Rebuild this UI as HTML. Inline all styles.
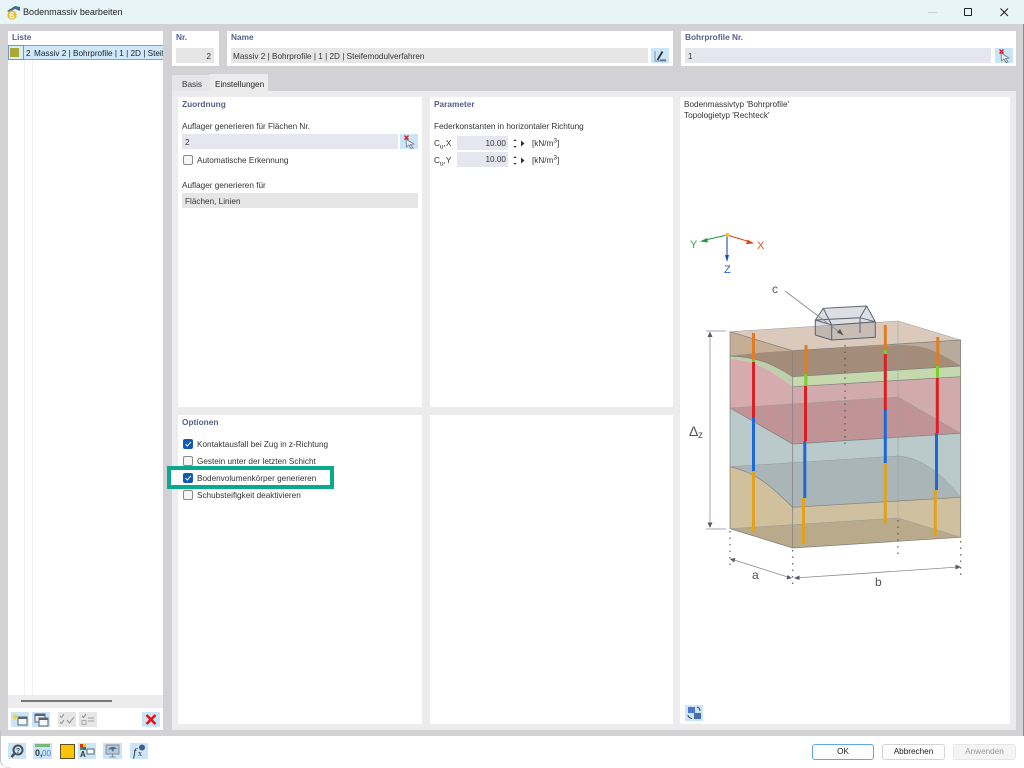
<!DOCTYPE html>
<html lang="de"><head><meta charset="utf-8"><title>Bodenmassiv bearbeiten</title>
<style>
html,body{margin:0;padding:0;width:1024px;height:768px;overflow:hidden;background:#fff}
body{font-family:"Liberation Sans",sans-serif;font-size:8.2px;color:#333;position:relative;filter:blur(.3px)}
.a{position:absolute;box-sizing:border-box}
.w{background:#fff}
.t{position:absolute;white-space:nowrap;line-height:11px;height:11px}
.h{font-weight:bold;color:#55608c;font-size:8.3px}
.f{position:absolute;background:#e6e6f0;height:15px;line-height:17px;box-sizing:border-box;padding:0 3px;white-space:nowrap;overflow:hidden}
.g{background:#e6e6e6}
.b{position:absolute;background:#cbe5f8}
.cb{position:absolute;width:10px;height:10px;box-sizing:border-box;border:1px solid #8a8a8a;border-radius:2px;background:#f6f6f6}
.cb.on{background:#0f5cb4;border-color:#0f5cb4}
.cb.on svg{position:absolute;left:0;top:0}
.btn{position:absolute;top:744px;height:16px;line-height:14px;text-align:center;box-sizing:border-box;border:1px solid #d4d4d4;border-radius:3px;background:#fdfdfd;color:#222}
svg{position:absolute;overflow:visible}
</style></head><body>

<div class="a" style="left:0;top:0;width:1024px;height:24px;background:#e8f5f8"></div>
<svg style="left:6px;top:4px" width="16" height="16" viewBox="0 0 16 16"><path d="M1 7 L9 2 L14 3 L14 7 L9 5 L3 8Z" fill="#3c6d96"/><circle cx="6" cy="11" r="4.6" fill="#f0b81e"/><text x="6" y="14.4" font-size="9.5" font-weight="bold" text-anchor="middle" fill="#fff" font-family="Liberation Sans">6</text></svg>
<div class="t" style="left:23px;top:7px;font-size:9.05px;color:#222">Bodenmassiv bearbeiten</div>
<div class="a" style="left:928px;top:12px;width:9px;height:1px;background:#c8d0d2"></div>
<div class="a" style="left:964px;top:8px;width:8px;height:8px;border:1.3px solid #222;border-radius:1px"></div>
<svg style="left:1000px;top:8px" width="9" height="9" viewBox="0 0 9 9"><path d="M.5 .5L8 8M8 .5L.5 8" stroke="#222" stroke-width="1.1" fill="none"/></svg>

<div class="a" style="left:0;top:24px;width:1023px;height:712px;background:#d2d2d5"></div>
<div class="a" style="left:1023px;top:24px;width:1px;height:712px;background:#8c8c90"></div>
<div class="a" style="left:0;top:730px;width:10px;height:38px;border-left:1px solid #c4c4c6;border-bottom:1px solid #e0e0e0;border-bottom-left-radius:8px"></div>

<!-- Liste -->
<div class="a w" style="left:8px;top:31px;width:155px;height:699px"></div>
<div class="t h" style="left:12px;top:32px">Liste</div>
<div class="a" style="left:24px;top:45px;width:1px;height:650px;background:#eef0f6"></div>
<div class="a" style="left:32px;top:45px;width:1px;height:650px;background:#eef0f6"></div>
<div class="a" style="left:8px;top:45px;width:155px;height:15px;background:#cfe8fb;border-top:1px solid #66aee8;border-bottom:1px solid #66aee8"></div>
<div class="a" style="left:8px;top:45px;width:16px;height:15px;border:1px solid #6b9cc6;background:#d9ecfa"></div>
<div class="a" style="left:10px;top:48px;width:9px;height:9px;background:#aaa832"></div>
<div class="t" style="left:26px;top:48px;color:#222">2</div>
<div class="t" style="left:34px;top:48px;width:129px;overflow:hidden;color:#222">Massiv 2 | Bohrprofile | 1 | 2D | Steifemodulverfahren</div>
<div class="a" style="left:8px;top:695px;width:155px;height:13px;background:#ececec"></div>
<div class="a" style="left:21px;top:700px;width:91px;height:2px;background:#777"></div>

<div class="b" style="left:11px;top:712px;width:18px;height:15px"></div>
<svg style="left:11px;top:712px" width="18" height="15" viewBox="0 0 18 15"><rect x="7" y="5" width="9" height="8" fill="#f4f8fb" stroke="#56646e"/><rect x="7" y="5" width="9" height="2" fill="#56646e"/><path d="M4 1l1 2.2 2.3-.6-1.2 2 1.6 1.7-2.4-.1L4 8.3 3.2 6.2 .8 6.3l1.600-1.700-1.200-2 2.300.6z" fill="#f6d52a"/></svg>
<div class="b" style="left:32px;top:712px;width:18px;height:15px"></div>
<svg style="left:32px;top:712px" width="18" height="15" viewBox="0 0 18 15"><rect x="3" y="2" width="10" height="8" fill="#e8f0f6" stroke="#56646e"/><rect x="3" y="2" width="10" height="2" fill="#56646e"/><rect x="7" y="6" width="9" height="8" fill="#f4f8fb" stroke="#56646e"/><rect x="7" y="6" width="9" height="2" fill="#56646e"/></svg>
<div class="a" style="left:58px;top:712px;width:18px;height:15px;background:#e6e6e6"></div>
<svg style="left:58px;top:712px" width="18" height="15" viewBox="0 0 18 15"><path d="M2 4l1.500 1.500L6 2M2 10l1.500 1.500L6 8M9 8l2.500 3L16 5" stroke="#8b8b8b" fill="none"/></svg>
<div class="a" style="left:79px;top:712px;width:18px;height:15px;background:#e6e6e6"></div>
<svg style="left:79px;top:712px" width="18" height="15" viewBox="0 0 18 15"><path d="M3 4l1.500 1.500L7 2" stroke="#8b8b8b" fill="none"/><rect x="3" y="8.500" width="4" height="4" fill="none" stroke="#aaa"/><path d="M9 6h6M9 9h6" stroke="#a0a0a0"/></svg>
<div class="b" style="left:142px;top:712px;width:18px;height:15px"></div>
<svg style="left:142px;top:712px" width="18" height="15" viewBox="0 0 18 15"><path d="M4.500 3L13.500 12M13.500 3L4.500 12" stroke="#ee1111" stroke-width="2.600"/></svg>

<!-- Kopfzeile -->
<div class="a w" style="left:172px;top:31px;width:47px;height:35px"></div>
<div class="t h" style="left:176px;top:32px">Nr.</div>
<div class="f g" style="left:176px;top:48px;width:38px;text-align:right">2</div>
<div class="a w" style="left:227px;top:31px;width:446px;height:35px"></div>
<div class="t h" style="left:231px;top:32px">Name</div>
<div class="f g" style="left:231px;top:48px;width:417px;padding-left:2px">Massiv 2 | Bohrprofile | 1 | 2D | Steifemodulverfahren</div>
<div class="b" style="left:651px;top:48px;width:18px;height:15px"></div>
<svg style="left:651px;top:48px" width="18" height="15" viewBox="0 0 18 15"><path d="M4 3v10h11" stroke="#7d93a6" fill="none"/><path d="M6.500 12L11.500 3.500" stroke="#333" stroke-width="1.800"/><path d="M9 12h6" stroke="#555"/></svg>
<div class="a w" style="left:681px;top:31px;width:335px;height:35px"></div>
<div class="t h" style="left:685px;top:32px">Bohrprofile Nr.</div>
<div class="f" style="left:685px;top:48px;width:306px">1</div>
<div class="b" style="left:995px;top:48px;width:18px;height:15px"></div>
<svg style="left:995px;top:48px" width="18" height="15" viewBox="0 0 18 15"><path d="M6 5l8 5-3.500.5L13 14l-2 .5-2-3.500-2.500 2z" fill="#e8eef2" stroke="#6c7a86" stroke-width=".8"/><path d="M4.500 1.500l4 4M8.500 1.500l-4 4" stroke="#d42020" stroke-width="1.400"/></svg>

<!-- Tabs -->
<div class="a" style="left:172px;top:75px;width:38px;height:16px;background:#e6e6e8"></div>
<div class="t" style="left:182px;top:79px">Basis</div>
<div class="a" style="left:210px;top:74px;width:58px;height:17px;background:#ececec"></div>
<div class="t" style="left:215px;top:79px;color:#222">Einstellungen</div>
<div class="a" style="left:172px;top:91px;width:844px;height:639px;background:#ececec"></div>

<!-- Zuordnung -->
<div class="a w" style="left:178px;top:97px;width:244px;height:310px"></div>
<div class="t h" style="left:182px;top:99px">Zuordnung</div>
<div class="t" style="left:182px;top:121px">Auflager generieren für Flächen Nr.</div>
<div class="f" style="left:182px;top:134px;width:216px">2</div>
<div class="b" style="left:400px;top:134px;width:18px;height:15px"></div>
<svg style="left:400px;top:134px" width="18" height="15" viewBox="0 0 18 15"><path d="M6 5l8 5-3.500.5L13 14l-2 .5-2-3.500-2.500 2z" fill="#e8eef2" stroke="#6c7a86" stroke-width=".8"/><path d="M4.500 1.500l4 4M8.500 1.500l-4 4" stroke="#d42020" stroke-width="1.400"/></svg>
<div class="cb" style="left:183px;top:155px"></div>
<div class="t" style="left:197px;top:155px">Automatische Erkennung</div>
<div class="t" style="left:182px;top:180px">Auflager generieren für</div>
<div class="f g" style="left:182px;top:193px;width:236px">Flächen, Linien</div>

<!-- Parameter -->
<div class="a w" style="left:430px;top:97px;width:243px;height:310px"></div>
<div class="t h" style="left:434px;top:99px">Parameter</div>
<div class="t" style="left:434px;top:121px">Federkonstanten in horizontaler Richtung</div>
<div class="t" style="left:434px;top:138px">C<sub style="font-size:6.500px;line-height:0">u</sub>,X</div>
<div class="f" style="left:457px;top:136px;width:51px;height:14px;line-height:15px;text-align:right;padding-right:2px">10.00</div>
<div class="t" style="left:532px;top:138px">[kN/m<sup style="font-size:6.500px;line-height:0">3</sup>]</div>
<div class="t" style="left:434px;top:155px">C<sub style="font-size:6.500px;line-height:0">u</sub>,Y</div>
<div class="f" style="left:457px;top:152px;width:51px;height:15px;line-height:16px;text-align:right;padding-right:2px">10.00</div>
<div class="t" style="left:532px;top:155px">[kN/m<sup style="font-size:6.500px;line-height:0">3</sup>]</div>
<svg style="left:512px;top:137px" width="14" height="30" viewBox="0 0 14 30"><path d="M1.500 4L3 2 4.500 4zM1.500 9L3 11 4.500 9zM1.500 21L3 19 4.500 21zM1.500 26L3 28 4.500 26zM9 3.500L12.500 6.500 9 9.500zM9 20.500L12.500 23.500 9 26.500z" fill="#333"/></svg>

<!-- Optionen -->
<div class="a w" style="left:178px;top:415px;width:244px;height:309px"></div>
<div class="t h" style="left:182px;top:417px">Optionen</div>
<div class="a" style="left:167px;top:466px;width:167px;height:23px;background:#fff;border:4px solid #0aa88c"></div>
<div class="cb on" style="left:183px;top:439px"><svg width="8" height="8" viewBox="0 0 8 8"><path d="M1.500 4.200L3.300 6 6.800 2" stroke="#fff" fill="none"/></svg></div>
<div class="t" style="left:197px;top:439px">Kontaktausfall bei Zug in z-Richtung</div>
<div class="cb" style="left:183px;top:456px"></div>
<div class="t" style="left:197px;top:456px">Gestein unter der letzten Schicht</div>
<div class="cb on" style="left:183px;top:473px"><svg width="8" height="8" viewBox="0 0 8 8"><path d="M1.500 4.200L3.300 6 6.800 2" stroke="#fff" fill="none"/></svg></div>
<div class="t" style="left:197px;top:473px">Bodenvolumenkörper generieren</div>
<div class="cb" style="left:183px;top:490px"></div>
<div class="t" style="left:197px;top:490px">Schubsteifigkeit deaktivieren</div>

<div class="a w" style="left:430px;top:415px;width:243px;height:309px"></div>

<!-- Grafik -->
<div class="a w" style="left:680px;top:97px;width:330px;height:627px"></div>
<div class="t" style="left:684px;top:99px">Bodenmassivtyp 'Bohrprofile'</div>
<div class="t" style="left:684px;top:110px">Topologietyp 'Rechteck'</div>

<svg style="left:0;top:0" width="1024" height="768" viewBox="0 0 1024 768" font-family="Liberation Sans">
<!-- axes -->
<path d="M727 235L752 242.500" stroke="#d0481c" stroke-width="1.100"/><path d="M754 243.500L746 244 747.500 239.500z" fill="#d0481c"/>
<path d="M727 235L703 240.500" stroke="#1c9a4a" stroke-width="1.100"/><path d="M700 241.500L707 238 708 242.500z" fill="#1c9a4a"/>
<path d="M727 235V258" stroke="#1c48c0" stroke-width="1.100"/><path d="M727 262L725 255H729z" fill="#1c48c0"/>
<circle cx="727.300" cy="234.700" r="2" fill="#f2c81e"/>
<text x="757" y="249" font-size="11" fill="#d8582c">X</text>
<text x="690" y="248" font-size="11" fill="#2aa860">Y</text>
<text x="724" y="273" font-size="11" fill="#2c58c8">Z</text>

<!-- top -->
<path d="M730 331.700L792.700 350.700 960.700 340 898 321z" fill="#dbcabb"/>
<!-- brown -->
<path d="M730 331.700L792.700 350.700V376.700C770 360 755 357 730 356z" fill="#c6ad96"/>
<path d="M792.700 350.700L960.700 340V366L792.700 376.700z" fill="#b9aa9b"/>
<path d="M730 356C760 352 772 352 800 350L898 345C925 345 935 350 960.700 366L792.700 376.700C770 362 755 357 730 356z" fill="#a38d7a"/>
<!-- green -->
<path d="M730 356C755 357 770 362 792.700 376.700V386.700C770 370 755 360 730 359z" fill="#bfcfaa"/>
<path d="M792.700 376.700L960.700 366V376.700L792.700 386.700z" fill="#c6d8ae"/>
<!-- red -->
<path d="M730 359C755 360 770 370 792.700 386.700V444L730 408z" fill="#d6abad"/>
<path d="M792.700 386.700L960.700 376.700V433.300L792.700 444z" fill="#d1abac"/>
<path d="M730 408L792.700 444 960.700 433.300 898 397z" fill="#c09496"/>
<!-- blue -->
<path d="M730 408L792.700 444V507.300C770 485 755 472 730 466.700z" fill="#bacaca"/>
<path d="M792.700 444L960.700 433.300V497.300L792.700 507.300z" fill="#bac9c9"/>
<path d="M730 466.700L898 456C925 458 945 478 960.700 497.300L792.700 507.300C770 485 755 472 730 466.700z" fill="#a9b5b7"/>
<!-- tan -->
<path d="M730 466.700C755 472 770 485 792.700 507.300V548L730 528.700z" fill="#d1c09c"/>
<path d="M792.700 507.300L960.700 497.300V537.300L792.700 548z" fill="#cfc0a0"/>
<path d="M730 528.700L792.700 548 960.700 537.300 898 518z" fill="#b9aa8c"/>
<!-- edges -->
<g fill="none" stroke="#7d7d7d" stroke-width=".7">
<path d="M730 331.700L792.700 350.700 960.700 340V537.300L792.700 548 730 528.700z"/>
<path d="M792.700 350.700V548"/>
<path d="M730 408L792.700 444 960.700 433.300"/>
<path d="M730 466.700C755 472 770 485 792.700 507.300L960.700 497.300"/>
<path d="M792.700 376.700L960.700 366M792.700 386.700L960.700 376.700M730 356C755 357 770 362 792.700 376.700"/>
</g>
<g fill="none" stroke="#9a9a9a" stroke-width=".5">
<path d="M730 331.700L898 321 960.700 340M898 321V518M730 408L898 397 960.700 433.300M730 466.700L898 456C925 458 945 478 960.700 497.300M730 528.700L898 518 960.700 537.300"/>
</g>
<!-- central dots -->
<path d="M845 345V449" stroke="#444" stroke-width="1" stroke-dasharray="1.500 5"/>
<!-- poles -->
<g stroke-width="3" fill="none">
<path d="M753.500 333V359.500" stroke="#df7d20"/><path d="M753.500 359.500V362" stroke="#7ccc2c"/><path d="M753.500 362V418" stroke="#dc1e26"/><path d="M753.500 418V471" stroke="#1c68d8"/><path d="M753.500 471V532" stroke="#e2a21e"/>
<path d="M806 345V374" stroke="#df7d20"/><path d="M805.800 374V386" stroke="#7ccc2c"/><path d="M805.500 386V441" stroke="#dc1e26"/><path d="M804.800 441V498" stroke="#1c68d8"/><path d="M803.500 498V544" stroke="#e2a21e"/>
<path d="M885.300 325V350" stroke="#df7d20"/><path d="M885.300 350V354" stroke="#7ccc2c"/><path d="M885.300 354V410" stroke="#dc1e26"/><path d="M885.300 410V463" stroke="#1c68d8"/><path d="M885.300 463V524" stroke="#e2a21e"/>
<path d="M937.800 337V366" stroke="#df7d20"/><path d="M937.500 366V378" stroke="#7ccc2c"/><path d="M937.300 378V433" stroke="#dc1e26"/><path d="M936.500 433V490" stroke="#1c68d8"/><path d="M935.300 490V536" stroke="#e2a21e"/>
</g>
<!-- house -->
<path d="M815.300 320L823.300 308.300 831.700 325V340L815.300 335z" fill="#8f95a5" fill-opacity=".35"/>
<path d="M823.300 308.300L866.700 306 875.300 321.700 831.700 325z" fill="#8f95a5" fill-opacity=".3"/>
<path d="M831.700 325L875.300 321.700V337.300L831.700 340z" fill="#8f95a5" fill-opacity=".25"/>
<g fill="none" stroke="#5c6070" stroke-width="1">
<path d="M815.300 320V335L831.700 340 875.300 337.300V321.700L860 317.700 815.300 320 831.700 325 875.300 321.700M831.700 325V340M860 317.700V333M815.300 320L823.300 308.300 866.700 306 875.300 321.700M866.700 306L860 317.700M823.300 308.300L831.700 325"/>
</g>
<path d="M785 291L842 334" stroke="#8a8a94" stroke-width=".9"/><path d="M843.500 335.500L837 332.500 840 329z" fill="#555"/>
<text x="772" y="293" font-size="12" fill="#555">c</text>
<!-- dims -->
<g stroke="#b8b8c0" fill="none" stroke-width="1.200"><path d="M710 335V525M706 331H726M706 529H726"/></g>
<path d="M710 331.500L707.500 337H712.500zM710 528L707.500 522.500H712.500z" fill="#555a68"/>
<text x="689" y="436" font-size="14" fill="#555">Δ</text><text x="698" y="438" font-size="10" fill="#555">z</text>
<g stroke="#444" stroke-width="1" stroke-dasharray="1.500 5" fill="none"><path d="M730 531V566M792.700 550V584M898 520V556M960.700 541V575"/></g>
<path d="M731 559L791 578M795 578L959 567" stroke="#8a8a94" stroke-width=".8" fill="none"/>
<path d="M730 559L735.500 558 734 562.500zM792 578L786.500 579.500 787.500 575zM794 578L799.500 575.500 799.500 580zM961 567L955.500 564.500 955.500 569.500z" fill="#555a68"/>
<text x="752" y="579" font-size="12" fill="#555">a</text>
<text x="875" y="586" font-size="12" fill="#555">b</text>
</svg>

<div class="b" style="left:685px;top:705px;width:18px;height:16px"></div>
<svg style="left:685px;top:705px" width="18" height="16" viewBox="0 0 18 16"><rect x="3" y="2" width="7" height="6" fill="#4a78d0"/><rect x="9" y="8" width="7" height="6" fill="#4a6ea8"/><path d="M12 2c2 .5 3 2 3 4M3 10c0 2 1.500 3 4 3.500" stroke="#445" fill="none"/></svg>

<!-- Fusszeile -->
<div class="b" style="left:8px;top:743px;width:18px;height:16px"></div>
<svg style="left:8px;top:743px" width="18" height="16" viewBox="0 0 18 16"><circle cx="10" cy="7" r="4.500" fill="none" stroke="#4a4f55" stroke-width="2"/><path d="M6.500 10.500L3.500 14" stroke="#4a4f55" stroke-width="2.500"/><text x="10" y="10" font-size="7" font-weight="bold" text-anchor="middle" fill="#4a4f55" font-family="Liberation Sans">?</text></svg>
<div class="b" style="left:33px;top:743px;width:19px;height:16px"></div>
<svg style="left:33px;top:743px" width="19" height="16" viewBox="0 0 19 16" font-family="Liberation Sans"><rect x="2" y="1" width="15" height="3" fill="#78b878"/><text x="2" y="13" font-size="9" font-weight="bold" fill="#333">0,</text><text x="9" y="13" font-size="8" fill="#4a80d8">00</text></svg>
<div class="a" style="left:60px;top:744px;width:15px;height:15px;background:#fcc500;border:1px solid #5a5030"></div>
<div class="b" style="left:78px;top:743px;width:18px;height:16px"></div>
<svg style="left:78px;top:743px" width="18" height="16" viewBox="0 0 18 16" font-family="Liberation Sans"><rect x="2" y="1" width="3" height="3" fill="#d83020"/><rect x="5" y="1" width="3" height="3" fill="#e8c820"/><rect x="2" y="4" width="3" height="3" fill="#30a040"/><rect x="5" y="4" width="3" height="3" fill="#3060d0"/><text x="2" y="14" font-size="8" font-weight="bold" fill="#333">A</text><rect x="9" y="6" width="7" height="5" fill="#fff" stroke="#56646e"/></svg>
<div class="b" style="left:103px;top:743px;width:19px;height:16px"></div>
<svg style="left:103px;top:743px" width="19" height="16" viewBox="0 0 19 16"><rect x="3" y="2" width="13" height="9" fill="#b8c8d4" stroke="#7c8c98"/><path d="M5 7C7 3 12 3 14 6L11 6 10 9 8 6z" fill="#4c6c8c"/><path d="M9.500 11V14M6.500 14H12.500" stroke="#7c8c98"/></svg>
<div class="b" style="left:130px;top:743px;width:18px;height:16px"></div>
<svg style="left:130px;top:743px" width="18" height="16" viewBox="0 0 18 16" font-family="Liberation Serif"><text x="3" y="13" font-size="12" font-style="italic" fill="#333">f</text><text x="8" y="13" font-size="8" fill="#333">x</text><circle cx="12" cy="4.500" r="3" fill="#41608c"/></svg>

<div class="btn" style="left:812px;width:62px;border-color:#60a8e0">OK</div>
<div class="btn" style="left:882px;width:63px">Abbrechen</div>
<div class="btn" style="left:953px;width:63px;background:#f4f4f4;color:#9a9a9a;border-color:#e6e6e6">Anwenden</div>
</body></html>
